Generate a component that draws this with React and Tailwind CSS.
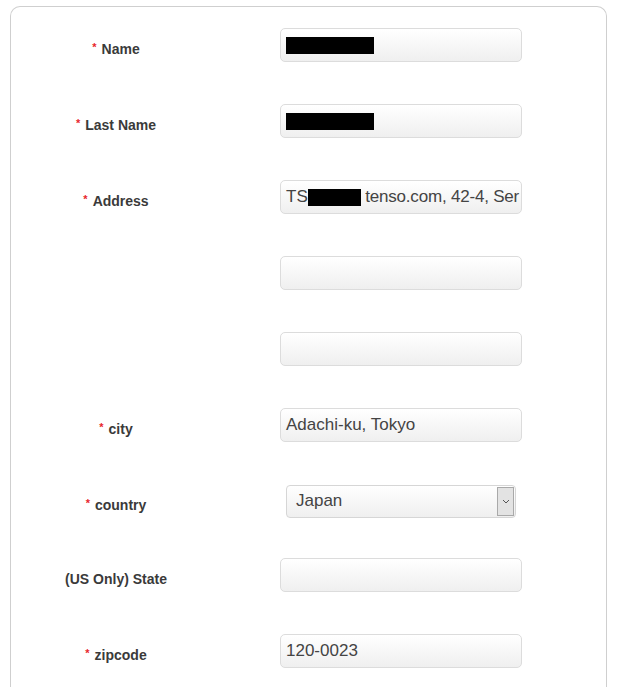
const rows = [
  { label: "Name", req: true, kind: "redacted", w: 88 },
  { label: "Last Name", req: true, kind: "redacted", w: 88 },
  { label: "Address", req: true, kind: "address" },
  { label: "", kind: "empty" },
  { label: "", kind: "empty" },
  { label: "city", req: true, kind: "text", value: "Adachi-ku, Tokyo" },
  { label: "country", req: true, kind: "select", value: "Japan" },
  { label: "(US Only) State", kind: "empty" },
  { label: "zipcode", req: true, kind: "text", value: "120-0023" },
];

function Box({ children }) {
  return (
    <div className="w-[242px] h-[34px] rounded-[5px] border border-[#dcdcdc] bg-gradient-to-b from-white to-[#efefef] px-[5px] flex items-center overflow-hidden whitespace-nowrap text-[17px] text-[#444]">
      {children}
    </div>
  );
}

function Control({ row }) {
  if (row.kind === "redacted") {
    return (
      <Box>
        <span className="block h-[17px] bg-black" style={{ width: row.w }} />
      </Box>
    );
  }
  if (row.kind === "address") {
    return (
      <Box>
        <span>TS</span>
        <span className="block h-[17px] w-[53px] bg-black shrink-0" />
        <span className="tracking-[-0.2px]">&nbsp;tenso.com, 42-4, Ser</span>
      </Box>
    );
  }
  if (row.kind === "text") {
    return <Box>{row.value}</Box>;
  }
  if (row.kind === "select") {
    return (
      <div className="ml-[6px] w-[230px] h-[33px] rounded-[4px] border border-[#d6d6d6] bg-gradient-to-b from-white to-[#efefef] flex items-stretch text-[17px] text-[#444]">
        <div className="flex-1 flex items-center pl-[9px]">{row.value}</div>
        <div className="w-[17px] my-[1px] mr-[1px] border border-[#a9a9a9] bg-[#e3e3e3] flex items-center justify-center">
          <svg width="8" height="5" viewBox="0 0 8 5" fill="none">
            <path d="M1 1l3 3 3-3" stroke="#555" strokeWidth="1" />
          </svg>
        </div>
      </div>
    );
  }
  return <Box />;
}

export default function App() {
  return (
    <div className="bg-white min-h-[687px] pt-[6px] pl-[10px] pr-[11px] font-['Liberation_Sans',Arial,sans-serif]">
      <div className="border border-[#cfcfcf] rounded-t-[10px] border-b-0 pt-[21px] h-[700px]">
        {rows.map((row, i) => (
          <div key={i} className={`flex items-center h-[34px] ${row.kind === "select" ? "mb-[40px]" : "mb-[42px]"}`}>
            <div className="w-[210px] text-center text-[14px] font-bold text-[#3a3a3a] pt-[8px]">
              {row.req && <span className="relative -top-[3px] text-[11px] text-[#e8262c] mr-[5px]">*</span>}
              {row.label}
            </div>
            <div className="ml-[59px]">
              <Control row={row} />
            </div>
          </div>
        ))}
      </div>
    </div>
  );
}
